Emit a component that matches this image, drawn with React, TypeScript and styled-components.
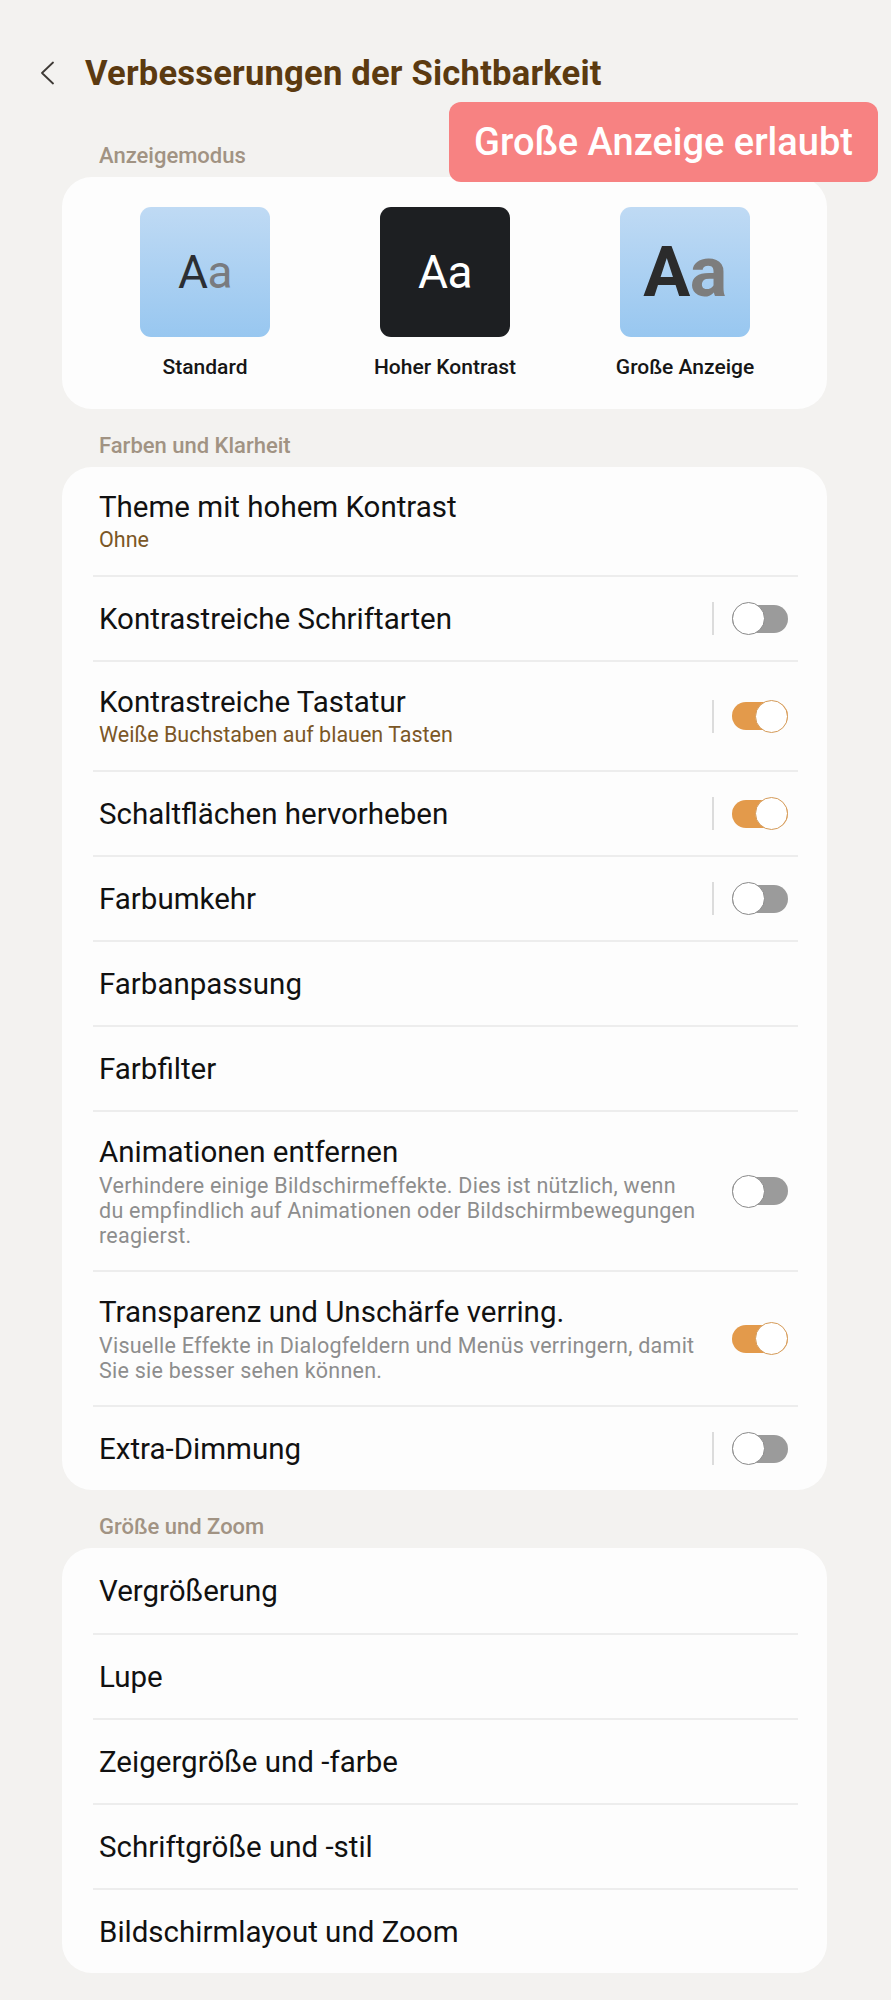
import React from "react";
import styled, { createGlobalStyle } from "styled-components";

const GlobalStyle = createGlobalStyle`
  html, body { margin: 0; padding: 0; }
  body {
    background: #f3f2f0;
    font-family: Roboto, "Noto Sans", "Liberation Sans", sans-serif;
    -webkit-font-smoothing: antialiased;
  }
`;

const Page = styled.div`
  position: relative;
  width: 891px;
  min-height: 2000px;
  box-sizing: border-box;
  padding: 50px 64px 31px 62px;
  background: #f3f2f0;
`;

const Header = styled.header`
  display: flex;
  align-items: center;
  height: 46px;
  margin-left: -22px;
  gap: 31px;
`;

const BackButton = styled.button`
  display: flex;
  align-items: center;
  justify-content: center;
  width: 14px;
  height: 24px;
  padding: 0;
  border: 0;
  background: transparent;
  color: #3e3a36;
`;

const Title = styled.h1`
  margin: 0;
  font-size: 34.6px;
  font-weight: 700;
  color: #5b3a10;
  letter-spacing: 0.2px;
`;

const Badge = styled.div`
  position: absolute;
  top: 102px;
  left: 449px;
  width: 429px;
  height: 80px;
  border-radius: 12px;
  background: #f78282;
  color: #ffffff;
  display: flex;
  align-items: center;
  justify-content: center;
  font-size: 38px;
  font-weight: 500;
`;

const SectionLabel = styled.div<{ $top: number }>`
  margin-top: ${(p) => p.$top}px;
  padding: 0 0 9px 37px;
  font-size: 22px;
  line-height: 24px;
  font-weight: 500;
  color: #a19383;
`;

const Card = styled.section`
  background: #fdfdfd;
  border-radius: 30px;
  overflow: hidden;
`;

const ModeGrid = styled.div`
  display: grid;
  grid-template-columns: repeat(3, 240px);
  padding: 30px 22px 30px 23px;
`;

const Mode = styled.div`
  display: flex;
  flex-direction: column;
  align-items: center;
`;

const Tile = styled.div<{ $dark?: boolean }>`
  width: 130px;
  height: 130px;
  border-radius: 11px;
  display: flex;
  align-items: center;
  justify-content: center;
  background: ${(p) =>
    p.$dark ? "#1d1f22" : "linear-gradient(180deg, #bfdaf4 0%, #98c7f0 100%)"};
`;

const Sample = styled.span<{ $size: number; $bold?: boolean }>`
  font-family: Roboto, "Liberation Sans", sans-serif;
  font-size: ${(p) => p.$size}px;
  font-weight: ${(p) => (p.$bold ? 700 : 400)};
  line-height: 1;
  letter-spacing: -0.5px;
`;

const SampleA = styled.span<{ $color: string }>`
  color: ${(p) => p.$color};
`;

const ModeLabel = styled.div`
  margin-top: 18px;
  font-size: 21px;
  line-height: 24px;
  font-weight: 500;
  color: #161616;
`;

const Row = styled.div<{ $first?: boolean }>`
  display: flex;
  align-items: center;
  box-sizing: border-box;
  min-height: 85px;
  margin: 0 29px 0 31px;
  padding: 22.5px 10px 22.5px 6px;
  border-top: ${(p) => (p.$first ? "none" : "2px solid #ededed")};
`;

const RowText = styled.div`
  flex: 1;
  display: flex;
  flex-direction: column;
  min-width: 0;
`;

const RowTitle = styled.div`
  font-size: 29.5px;
  line-height: 34px;
  color: #111111;
`;

const RowSub = styled.div`
  margin-top: 3px;
  font-size: 21.5px;
  line-height: 26px;
  color: #7b5726;
`;

const RowDesc = styled.div`
  margin-top: 4px;
  font-size: 21.5px;
  line-height: 25px;
  letter-spacing: 0.25px;
  color: #8d8d8d;
  white-space: nowrap;
`;

const Divider = styled.span`
  width: 2px;
  height: 33px;
  background: #dcdcdc;
  margin-right: 18px;
`;

const Switch = styled.div<{ $on: boolean }>`
  position: relative;
  display: flex;
  align-items: center;
  justify-content: ${(p) => (p.$on ? "flex-end" : "flex-start")};
  width: 56px;
  height: 33px;
  flex-shrink: 0;
  &::before {
    content: "";
    position: absolute;
    left: 0;
    right: 0;
    top: 2.5px;
    bottom: 2.5px;
    border-radius: 14px;
    background: ${(p) => (p.$on ? "#e39a4b" : "#9b9b9b")};
  }
`;

const Knob = styled.span<{ $on: boolean }>`
  position: relative;
  box-sizing: border-box;
  width: 33px;
  height: 33px;
  border-radius: 50%;
  background: #ffffff;
  border: 1.5px solid ${(p) => (p.$on ? "#d49a58" : "#8a8a8a")};
`;

type Item = {
  title: string;
  sub?: string;
  desc?: string[];
  toggle?: boolean;
  divider?: boolean;
};

const colorItems: Item[] = [
  { title: "Theme mit hohem Kontrast", sub: "Ohne" },
  { title: "Kontrastreiche Schriftarten", toggle: false, divider: true },
  {
    title: "Kontrastreiche Tastatur",
    sub: "Weiße Buchstaben auf blauen Tasten",
    toggle: true,
    divider: true,
  },
  { title: "Schaltflächen hervorheben", toggle: true, divider: true },
  { title: "Farbumkehr", toggle: false, divider: true },
  { title: "Farbanpassung" },
  { title: "Farbfilter" },
  {
    title: "Animationen entfernen",
    desc: [
      "Verhindere einige Bildschirmeffekte. Dies ist nützlich, wenn",
      "du empfindlich auf Animationen oder Bildschirmbewegungen",
      "reagierst.",
    ],
    toggle: false,
  },
  {
    title: "Transparenz und Unschärfe verring.",
    desc: [
      "Visuelle Effekte in Dialogfeldern und Menüs verringern, damit",
      "Sie sie besser sehen können.",
    ],
    toggle: true,
  },
  { title: "Extra-Dimmung", toggle: false, divider: true },
];

const zoomItems: Item[] = [
  { title: "Vergrößerung" },
  { title: "Lupe" },
  { title: "Zeigergröße und -farbe" },
  { title: "Schriftgröße und -stil" },
  { title: "Bildschirmlayout und Zoom" },
];

function SettingRow({ item, first }: { item: Item; first: boolean }) {
  return (
    <Row $first={first}>
      <RowText>
        <RowTitle>{item.title}</RowTitle>
        {item.sub && <RowSub>{item.sub}</RowSub>}
        {item.desc && (
          <RowDesc>
            {item.desc.map((l, i) => (
              <React.Fragment key={i}>
                {i > 0 && <br />}
                {l}
              </React.Fragment>
            ))}
          </RowDesc>
        )}
      </RowText>
      {item.divider && <Divider />}
      {item.toggle !== undefined && (
        <Switch $on={item.toggle}>
          <Knob $on={item.toggle} />
        </Switch>
      )}
    </Row>
  );
}

export default function App() {
  return (
    <>
      <GlobalStyle />
      <Page>
        <Header>
          <BackButton aria-label="Zurück">
            <svg width="14" height="24" viewBox="0 0 14 24" fill="none">
              <path d="M13 1.5 L2 12 L13 22.5" stroke="currentColor" strokeWidth="1.8" strokeLinecap="round" strokeLinejoin="round" />
            </svg>
          </BackButton>
          <Title>Verbesserungen der Sichtbarkeit</Title>
        </Header>

        <SectionLabel $top={48}>Anzeigemodus</SectionLabel>
        <Card>
          <ModeGrid>
            <Mode>
              <Tile>
                <Sample $size={46}>
                  <SampleA $color="#2b2e33">A</SampleA>
                  <SampleA $color="#797b7f">a</SampleA>
                </Sample>
              </Tile>
              <ModeLabel>Standard</ModeLabel>
            </Mode>
            <Mode>
              <Tile $dark>
                <Sample $size={46}>
                  <SampleA $color="#ffffff">Aa</SampleA>
                </Sample>
              </Tile>
              <ModeLabel>Hoher Kontrast</ModeLabel>
            </Mode>
            <Mode>
              <Tile>
                <Sample $size={70} $bold>
                  <SampleA $color="#2b2b2b">A</SampleA>
                  <SampleA $color="#7d7d7d">a</SampleA>
                </Sample>
              </Tile>
              <ModeLabel>Große Anzeige</ModeLabel>
            </Mode>
          </ModeGrid>
        </Card>

        <SectionLabel $top={25}>Farben und Klarheit</SectionLabel>
        <Card>
          {colorItems.map((it, i) => (
            <SettingRow key={it.title} item={it} first={i === 0} />
          ))}
        </Card>

        <SectionLabel $top={25}>Größe und Zoom</SectionLabel>
        <Card>
          {zoomItems.map((it, i) => (
            <SettingRow key={it.title} item={it} first={i === 0} />
          ))}
        </Card>

        <Badge>Große Anzeige erlaubt</Badge>
      </Page>
    </>
  );
}
